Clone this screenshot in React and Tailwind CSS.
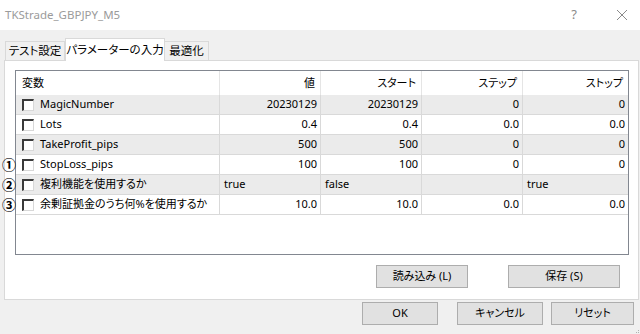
import React from "react";

const rows = [
  { name: "MagicNumber", v: "20230129", s: "20230129", st: "0", sp: "0" },
  { name: "Lots", v: "0.4", s: "0.4", st: "0.0", sp: "0.0" },
  { name: "TakeProfit_pips", v: "500", s: "500", st: "0", sp: "0" },
  { name: "StopLoss_pips", v: "100", s: "100", st: "0", sp: "0", mark: "①" },
  { name: "複利機能を使用するか", v: "true", s: "false", st: "", sp: "true", left: true, mark: "②" },
  { name: "余剰証拠金のうち何%を使用するか", v: "10.0", s: "10.0", st: "0.0", sp: "0.0", mark: "③" },
];

function Checkbox() {
  return (
    <div className="w-[12px] h-[12px] bg-white border-t-2 border-l-2 border-t-[#3a3a3a] border-l-[#3a3a3a] border-r border-b border-r-[#d8d8d8] border-b-[#d8d8d8] shrink-0" />
  );
}

function Cell({ children, w, left, last }) {
  return (
    <div
      className={
        (left ? "justify-start pl-[4px] " : "justify-end pr-[3px] ") +
        (last ? "" : "border-r border-[#d9d9d9] ") +
        "flex items-center h-full whitespace-nowrap " + w
      }
    >
      {children}
    </div>
  );
}

function Button({ children, w }) {
  return (
    <div className={"h-[23px] bg-[#e1e1e1] border border-[#adadad] flex items-center justify-center text-black whitespace-nowrap " + w}>
      {children}
    </div>
  );
}

export default function App() {
  return (
    <div className="w-[640px] h-[334px] bg-[#f0f0f0] flex flex-col font-['Noto_Sans','Noto_Sans_CJK_JP',sans-serif] [font-feature-settings:'palt'] text-[11px] text-black overflow-hidden relative">
      {/* title bar */}
      <div className="h-[30px] bg-white flex items-center pl-[5px] shrink-0">
        <span className="text-[#9b9b9b] text-[11.5px]">TKStrade_GBPJPY_M5</span>
        <span className="ml-auto text-[#8a8a8a] text-[13px] mr-[39px]">?</span>
        <svg width="12" height="12" viewBox="0 0 12 12" className="mr-[12px]">
          <path d="M1 1 L11 11 M11 1 L1 11" stroke="#8a8a8a" strokeWidth="1" />
        </svg>
      </div>

      {/* tabs */}
      <div className="flex items-end h-[22px] mt-[8px] pl-[5px] shrink-0 whitespace-nowrap text-[11.5px]">
        <div className="h-[19px] flex items-center bg-[#f0f0f0] border border-b-0 border-[#d9d9d9] w-[60px] justify-center">テスト設定</div>
        <div className="h-[23px] -mb-[1px] relative z-10 bg-white border border-b-0 border-[#d9d9d9] w-[100px] flex items-center justify-center">パラメーターの入力</div>
        <div className="h-[19px] bg-[#f0f0f0] border border-b-0 border-l-0 border-[#d9d9d9] w-[44px] flex items-center justify-center">最適化</div>
      </div>

      {/* panel */}
      <div className="ml-[4px] w-[635px] bg-white border border-[#d9d9d9] pl-[10px] pr-[9px] pt-[9px] pb-[11px] flex flex-col shrink-0">
        <div className="h-[185px] border border-[#828790] bg-white flex flex-col">
          {/* header */}
          <div className="h-[24px] flex shrink-0">
            <div className="w-[204px] border-r border-[#e5e5e5] flex items-center pl-[6px]">変数</div>
            <div className="w-[101px] border-r border-[#e5e5e5] flex items-center justify-end pr-[5px]">値</div>
            <div className="w-[101px] border-r border-[#e5e5e5] flex items-center justify-end pr-[5px]">スタート</div>
            <div className="w-[101px] border-r border-[#e5e5e5] flex items-center justify-end pr-[5px]">ステップ</div>
            <div className="w-[105px] flex items-center justify-end pr-[5px]">ストップ</div>
          </div>
          {rows.map((r, i) => (
            <div
              key={r.name}
              className={(i % 2 === 0 ? "bg-[#ebebeb] " : "bg-white ") + "h-[20px] flex border-b border-[#d9d9d9] relative shrink-0"}
            >
              {r.mark && (
                <span className="absolute left-[-14px] top-[0px] text-[14px] font-bold leading-[19px] font-['Noto_Sans_CJK_JP',sans-serif]">
                  {r.mark}
                </span>
              )}
              <div className="w-[204px] border-r border-[#d9d9d9] flex items-center pl-[6px] gap-[6px] whitespace-nowrap">
                <Checkbox />
                <span>{r.name}</span>
              </div>
              <Cell w="w-[101px]" left={r.left}>{r.v}</Cell>
              <Cell w="w-[101px]" left={r.left}>{r.s}</Cell>
              <Cell w="w-[101px]" left={r.left}>{r.st}</Cell>
              <Cell w="w-[105px]" left={r.left} last>{r.sp}</Cell>
            </div>
          ))}
        </div>
        <div className="flex justify-end gap-[40px] mt-[10px] pr-[9px]">
          <Button w="w-[92px]">読み込み (L)</Button>
          <Button w="w-[112px]">保存 (S)</Button>
        </div>
      </div>

      {/* bottom buttons */}
      <div className="flex mt-[2px] pl-[362px] shrink-0">
        <Button w="w-[76px]">OK</Button>
        <div className="w-[19px]" />
        <Button w="w-[86px]">キャンセル</Button>
        <div className="w-[8px]" />
        <Button w="w-[83px]">リセット</Button>
      </div>

      {/* resize grip */}
      <div className="absolute right-[1px] bottom-[1px] grid grid-cols-2 gap-[1px]">
        <span className="w-[1px] h-[1px]" />
        <span className="w-[1px] h-[1px] bg-[#b0b0b0]" />
        <span className="w-[1px] h-[1px] bg-[#b0b0b0]" />
        <span className="w-[1px] h-[1px] bg-[#b0b0b0]" />
      </div>
    </div>
  );
}
